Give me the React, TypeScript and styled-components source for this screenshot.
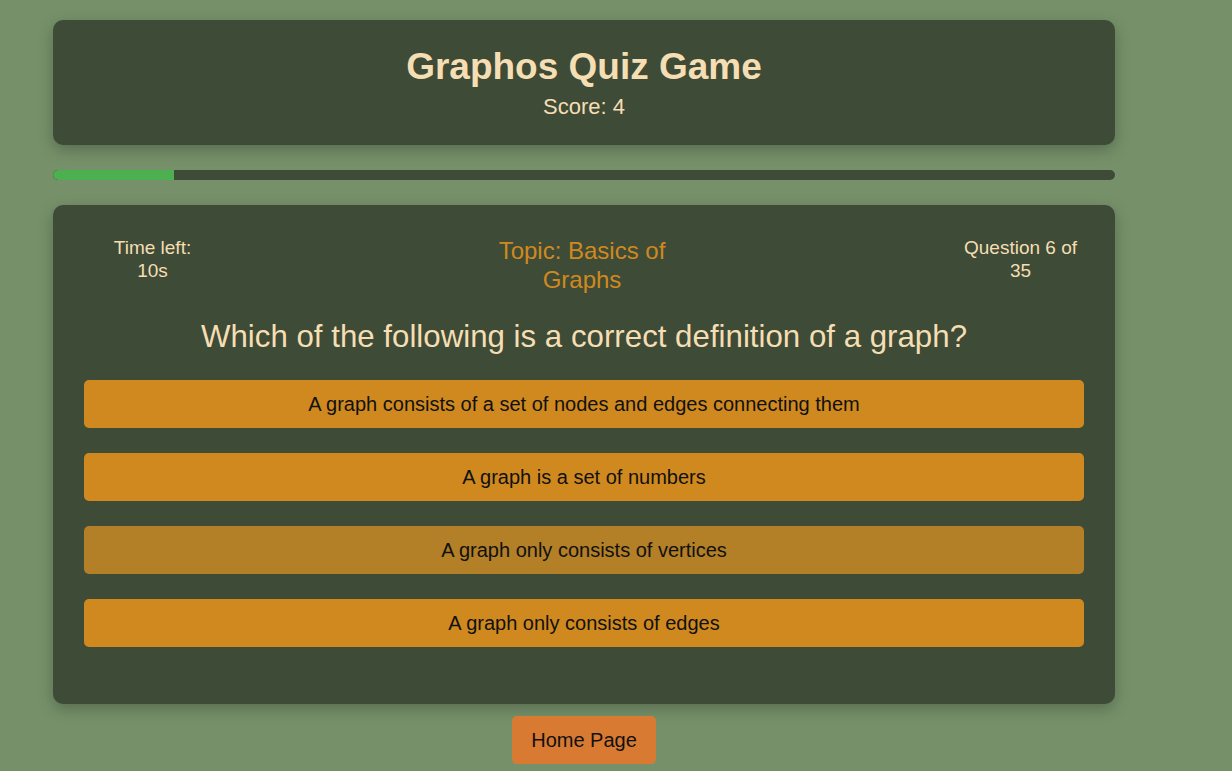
import React from "react";
import styled, { createGlobalStyle } from "styled-components";

const GlobalStyle = createGlobalStyle`
  html, body {
    margin: 0;
    padding: 0;
    background: #76916a;
    overflow: hidden;
  }
  body {
    font-family: "Liberation Sans", Arial, sans-serif;
  }
  * { box-sizing: border-box; }
`;

const Page = styled.div`
  padding: 20px 0 0 53px;
`;

const Container = styled.div`
  width: 1062px;
  display: flex;
  flex-direction: column;
`;

const Header = styled.header`
  background: #3e4b36;
  border-radius: 10px;
  padding: 25px 20px 26px;
  text-align: center;
  box-shadow: 0 5px 15px rgba(0, 0, 0, 0.25);
`;

const Title = styled.h1`
  margin: 0 0 6px;
  font-size: 37px;
  line-height: 43px;
  font-weight: 700;
  color: #f5deb3;
`;

const Score = styled.div`
  font-size: 22px;
  line-height: 25px;
  color: #f5deb3;
`;

const ProgressTrack = styled.div`
  margin-top: 25px;
  height: 10px;
  background: #3e4b36;
  border-radius: 5px;
  overflow: hidden;
`;

const ProgressFill = styled.div`
  height: 100%;
  background: #4caf50;
  border-radius: 5px 0 0 5px;
`;

const Card = styled.section`
  margin-top: 25px;
  background: #3e4b36;
  border-radius: 10px;
  padding: 32px 31px 32px;
  box-shadow: 0 5px 15px rgba(0, 0, 0, 0.25);
`;

const TopRow = styled.div`
  display: grid;
  grid-template-columns: 137px 1fr 127px;
  align-items: start;
`;

const Info = styled.div<{ $width: number }>`
  justify-self: center;
  width: ${(p) => p.$width}px;
  text-align: center;
  font-size: 19px;
  line-height: 22.5px;
  color: #f5deb3;
`;

const TopicCell = styled.div`
  display: flex;
  justify-content: center;
  padding-right: 14px;
`;

const Topic = styled.div`
  width: 200px;
  text-align: center;
  font-size: 24px;
  line-height: 28.8px;
  color: #d0891f;
`;

const Question = styled.h2`
  margin: 23px 0 25px;
  text-align: center;
  font-size: 31.25px;
  line-height: 37.5px;
  font-weight: 400;
  color: #f5deb3;
`;

const Options = styled.div`
  display: flex;
  flex-direction: column;
  gap: 25px;
  padding-bottom: 25px;
`;

const Option = styled.button<{ $hover?: boolean }>`
  display: block;
  width: 100%;
  border: none;
  border-radius: 5px;
  padding: 12.5px 20px;
  font-family: "Liberation Sans", Arial, sans-serif;
  font-size: 20px;
  line-height: 23px;
  color: #111;
  text-align: center;
  background: ${(p) => (p.$hover ? "#b37f27" : "#d0891f")};
  cursor: pointer;
`;

const Footer = styled.div`
  display: flex;
  justify-content: center;
  margin-top: 12px;
`;

const HomeButton = styled.button`
  border: none;
  border-radius: 5px;
  padding: 12.5px 19.5px;
  font-family: "Liberation Sans", Arial, sans-serif;
  font-size: 20px;
  line-height: 23px;
  color: #111;
  background: #d87a32;
  cursor: pointer;
`;

const options = [
  "A graph consists of a set of nodes and edges connecting them",
  "A graph is a set of numbers",
  "A graph only consists of vertices",
  "A graph only consists of edges",
];

export default function App() {
  const current = 6;
  const total = 35;
  const progress = ((current - 2) / total) * 100;
  return (
    <>
      <GlobalStyle />
      <Page>
        <Container>
          <Header>
            <Title>Graphos Quiz Game</Title>
            <Score>Score: 4</Score>
          </Header>
          <ProgressTrack>
            <ProgressFill style={{ width: `${progress}%` }} />
          </ProgressTrack>
          <Card>
            <TopRow>
              <Info $width={90}>Time left: 10s</Info>
              <TopicCell>
                <Topic>Topic: Basics of Graphs</Topic>
              </TopicCell>
              <Info $width={120}>
                Question {current} of {total}
              </Info>
            </TopRow>
            <Question>Which of the following is a correct definition of a graph?</Question>
            <Options>
              {options.map((o, i) => (
                <Option key={o} $hover={i === 2}>
                  {o}
                </Option>
              ))}
            </Options>
          </Card>
          <Footer>
            <HomeButton>Home Page</HomeButton>
          </Footer>
        </Container>
      </Page>
    </>
  );
}
